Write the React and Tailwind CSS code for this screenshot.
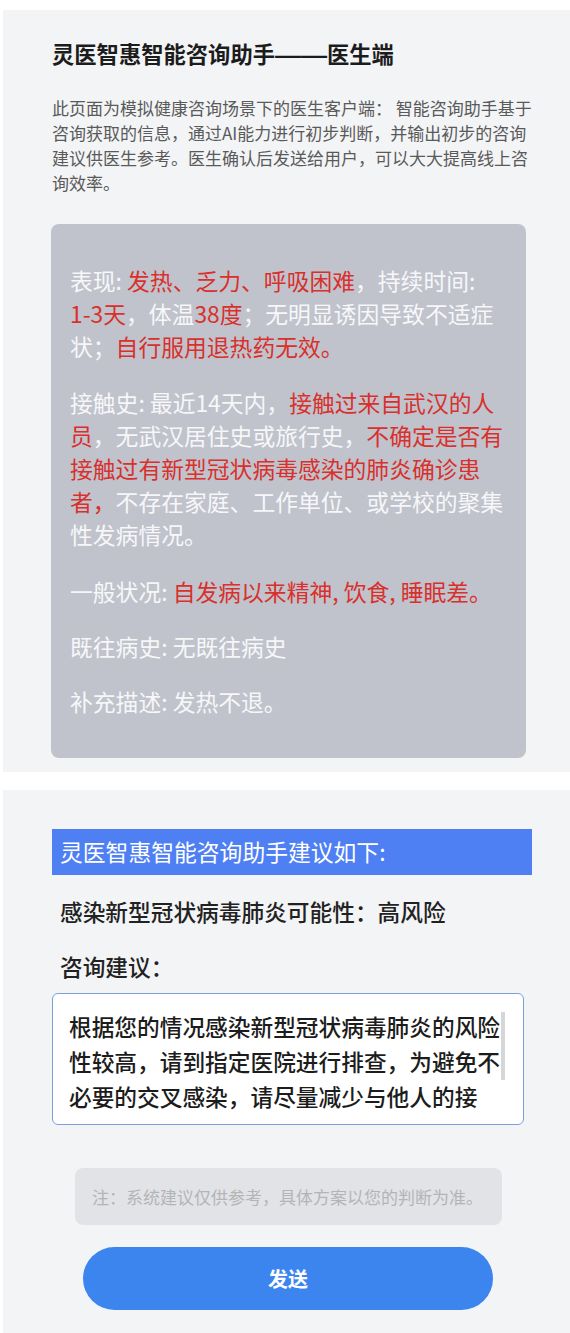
import React from "react";

// red highlight used for the key symptoms
const R = ({ children, className = "" }) => (
  <span className={`text-[#d9302c] ${className}`}>{children}</span>
);

const Para = ({ className = "", children }) => (
  <p className={`text-[22.8px] leading-[33px] text-[#f7f7f9] ${className}`}>{children}</p>
);

export default function App() {
  return (
    <div className="min-h-[1333px] bg-white font-['Noto_Sans_CJK_SC',sans-serif]">
      {/* ── Patient info panel ───────────────────────────── */}
      <section className="ml-[3px] mt-[10px] flex h-[762px] flex-col bg-[#f3f4f6] pt-[28px]">
        <h1 className="ml-[49px] h-[30px] text-[22.3px] font-bold leading-[30px] text-[#1c1c1c]">
          灵医智惠智能咨询助手
          <span className="inline-block w-[52px] font-['Liberation_Sans',sans-serif] leading-[20px]">
            <span className="inline-block origin-left scale-x-[1.17]">——</span>
          </span>
          医生端
        </h1>
        <p className="ml-[49px] mt-[27px] w-[486px] text-[17px] leading-[25px] text-[#5a5a5a]">
          此页面为模拟健康咨询场景下的医生客户端： 智能咨询助手基于咨询获取的信息，通过AI能力进行初步判断，并输出初步的咨询建议供医生参考。医生确认后发送给用户，可以大大提高线上咨询效率。
        </p>

        <div className="ml-[48px] mt-[29px] h-[534px] w-[475px] rounded-[8px] bg-[#c0c3cc] pl-[19px] pt-[40px]">
          <div className="w-[436px]">
            <Para>
              表现: <R>发热、乏力、呼吸困难</R>，持续时间: <R className="whitespace-nowrap">1-3天</R>，体温<R>38度</R>；无明显诱因导致不适症状；<R>自行服用退热药无效。</R>
            </Para>
            <Para className="mt-[23px]">
              接触史: 最近14天内，<R>接触过来自武汉的人员</R>，无武汉居住史或旅行史，<R>不确定是否有接触过有新型冠状病毒感染的肺炎确诊患者，</R>不存在家庭、工作单位、或学校的聚集性发病情况。
            </Para>
            <Para className="mt-[24px]">
              一般状况: <R>自发病以来精神, 饮食, 睡眠差。</R>
            </Para>
            <Para className="mt-[22px]">既往病史: 无既往病史</Para>
            <Para className="mt-[22px]">补充描述: 发热不退。</Para>
          </div>
        </div>
      </section>

      {/* ── Suggestion panel ─────────────────────────────── */}
      <section className="ml-[3px] mt-[18px] flex h-[543px] flex-col bg-[#f3f4f6] pt-[39px]">
        <div className="ml-[49px] h-[46px] w-[480px] bg-[#4e80f4] pl-[8px] text-[22.8px] leading-[46px] text-white">
          灵医智惠智能咨询助手建议如下:
        </div>
        <p className="ml-[57px] mt-[22px] text-[22.7px] font-medium leading-[30px] text-[#222]">
          感染新型冠状病毒肺炎可能性：高风险
        </p>
        <p className="ml-[57px] mt-[25px] text-[22.7px] font-medium leading-[30px] text-[#222]">
          咨询建议：
        </p>

        <div className="ml-[49px] mt-[11px] h-[132px] w-[472px] rounded-[6px] border-[1.5px] border-[#7c9fdc] bg-white pl-[16px] pt-[15px]">
          <div className="flex h-[105px] overflow-hidden">
            <p className="w-[432px] text-[22.7px] font-medium leading-[35px] text-[#1c1c1c]">
              根据您的情况感染新型冠状病毒肺炎的风险性较高，请到指定医院进行排查，为避免不必要的交叉感染，请尽量减少与他人的接触，外出时佩戴口罩，做好个人防护。
            </p>
            <div className="mt-[3px] h-[68px] w-[4px] shrink-0 bg-[#d6d6d8]" />
          </div>
        </div>

        <div className="ml-[72px] mt-[43px] h-[57px] w-[427px] rounded-[8px] bg-[#e2e3e6] pl-[17px] text-[17px] leading-[57px] text-[#b4b4b6]">
          注：系统建议仅供参考，具体方案以您的判断为准。
        </div>

        <button className="ml-[80px] mt-[22px] h-[63px] w-[410px] rounded-full bg-[#3c84ee] text-[20px] font-bold text-white">
          发送
        </button>
      </section>
    </div>
  );
}
